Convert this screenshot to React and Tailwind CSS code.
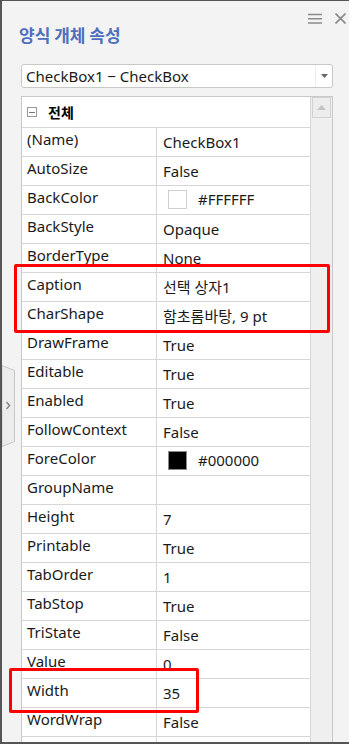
const rows = [
  { name: "(Name)", value: "CheckBox1" },
  { name: "AutoSize", value: "False" },
  { name: "BackColor", value: "#FFFFFF", swatch: "white" },
  { name: "BackStyle", value: "Opaque" },
  { name: "BorderType", value: "None" },
  { name: "Caption", value: "선택 상자1" },
  { name: "CharShape", value: "함초롬바탕, 9 pt" },
  { name: "DrawFrame", value: "True" },
  { name: "Editable", value: "True" },
  { name: "Enabled", value: "True" },
  { name: "FollowContext", value: "False" },
  { name: "ForeColor", value: "#000000", swatch: "black" },
  { name: "GroupName", value: "" },
  { name: "Height", value: "7" },
  { name: "Printable", value: "True" },
  { name: "TabOrder", value: "1" },
  { name: "TabStop", value: "True" },
  { name: "TriState", value: "False" },
  { name: "Value", value: "0" },
  { name: "Width", value: "35" },
  { name: "WordWrap", value: "False" },
  { name: "", value: "" },
];

function Swatch({ color }) {
  const cls =
    color === "black"
      ? "w-[19px] h-[19px] border border-[#8a8a8a] bg-black"
      : "w-[19px] h-[19px] border border-[#cfcfcf] bg-white";
  return <span className={cls} />;
}

function PropRow({ row }) {
  return (
    <div className="flex h-[29px] border-b border-[#d6d6d6] shrink-0">
      <div className="w-[135px] border-r border-[#d6d6d6] pl-[5px] pt-[1px] leading-[20px] text-[#1a1a1a]">
        {row.name}
      </div>
      <div className="flex-1 flex items-start pt-[4px] leading-[20px] text-[#1a1a1a]">
        {row.swatch ? (
          <div className="flex items-center gap-[11px] pl-[11px] -mt-[1px]">
            <Swatch color={row.swatch} />
            <span>{row.value}</span>
          </div>
        ) : (
          <span className="pl-[6px]">{row.value}</span>
        )}
      </div>
    </div>
  );
}

export default function App() {
  return (
    <div
      className="relative w-[349px] h-[744px] overflow-hidden bg-[#f3f3f3] border-l-2 border-t border-b-2 border-[#555] flex flex-col"
      style={{ fontFamily: '"Noto Sans", "Noto Sans CJK KR", sans-serif' }}
    >
      {/* toolbar icons */}
      <div className="flex justify-end items-start gap-[13px] pr-[3px] pt-[12px] h-[20px] shrink-0">
        <svg width="14" height="11" viewBox="0 0 14 11">
          <path d="M0 1.5H14M0 5.8H14M0 10H14" stroke="#8a8a8a" strokeWidth="1.6" />
        </svg>
        <svg width="11" height="11" viewBox="0 0 11 11">
          <path d="M0.5 0.5L10.5 10.5M10.5 0.5L0.5 10.5" stroke="#8a8a8a" strokeWidth="1.6" />
        </svg>
      </div>

      <h1
        className="mt-[2px] pl-[17px] text-[17px] leading-[24px] font-bold text-[#4d6fbd] shrink-0"
        style={{ fontFamily: '"Noto Sans CJK KR", sans-serif' }}
      >
        양식 개체 속성
      </h1>

      {/* object selector */}
      <div className="mt-[17px] ml-[19px] w-[312px] h-[24px] shrink-0 flex bg-white border border-[#c8c8c8] rounded-[3px] text-[15px] text-[#1a1a1a]">
        <div className="flex-1 flex items-center pl-[4px] leading-[20px]">CheckBox1 − CheckBox</div>
        <div className="w-[17px] border-l border-[#ececec] flex items-center justify-center">
          <svg width="7" height="4" viewBox="0 0 7 4">
            <path d="M0 0H7L3.5 4Z" fill="#666" />
          </svg>
        </div>
      </div>

      {/* property grid */}
      <div className="mt-[8px] ml-[19px] w-[312px] flex-1 min-h-0 flex border border-[#c8c8c8] border-b-0 text-[15px]">
        <div className="w-[289px] bg-white border-r border-[#d6d6d6] flex flex-col overflow-hidden">
          <div className="h-[31px] shrink-0 border-b border-[#d6d6d6] flex items-center pl-[5px] gap-[11px]">
            <span className="w-[10px] h-[10px] border border-[#9a9a9a] flex items-center justify-center">
              <span className="w-[6px] h-px bg-[#777]" />
            </span>
            <span
              className="text-[14px] font-bold text-black leading-[20px]"
              style={{ fontFamily: '"Noto Sans CJK KR", sans-serif' }}
            >
              전체
            </span>
          </div>
          {rows.map((r, i) => (
            <PropRow key={i} row={r} />
          ))}
        </div>
        <div className="w-[21px] bg-[#efefef] pt-0">
          <div className="ml-[1px] w-[19px] h-[21px] border border-[#d2d2d2] bg-[#ececec] flex items-center justify-center">
            <svg width="9" height="5" viewBox="0 0 9 5">
              <path d="M0 5H9L4.5 0Z" fill="#c4c4c4" />
            </svg>
          </div>
        </div>
      </div>

      {/* collapse handle on the left edge */}
      <svg className="absolute left-0 top-[364px]" width="14" height="82" viewBox="0 0 14 82">
        <path d="M0 0.5L12.5 5.5V76.5L0 81.5Z" fill="#ececec" stroke="#c8c8c8" strokeWidth="1" />
        <path d="M4.5 37L7.5 40.5L4.5 44" fill="none" stroke="#8a8a8a" strokeWidth="1.6" />
      </svg>

      {/* annotation boxes */}
      <div className="absolute left-[12px] top-[263px] w-[316px] h-[69px] border-[3px] border-[#ff0000] rounded-[2px]" />
      <div className="absolute left-[7px] top-[667px] w-[190px] h-[45px] border-[3px] border-[#ff0000] rounded-[2px]" />
    </div>
  );
}
